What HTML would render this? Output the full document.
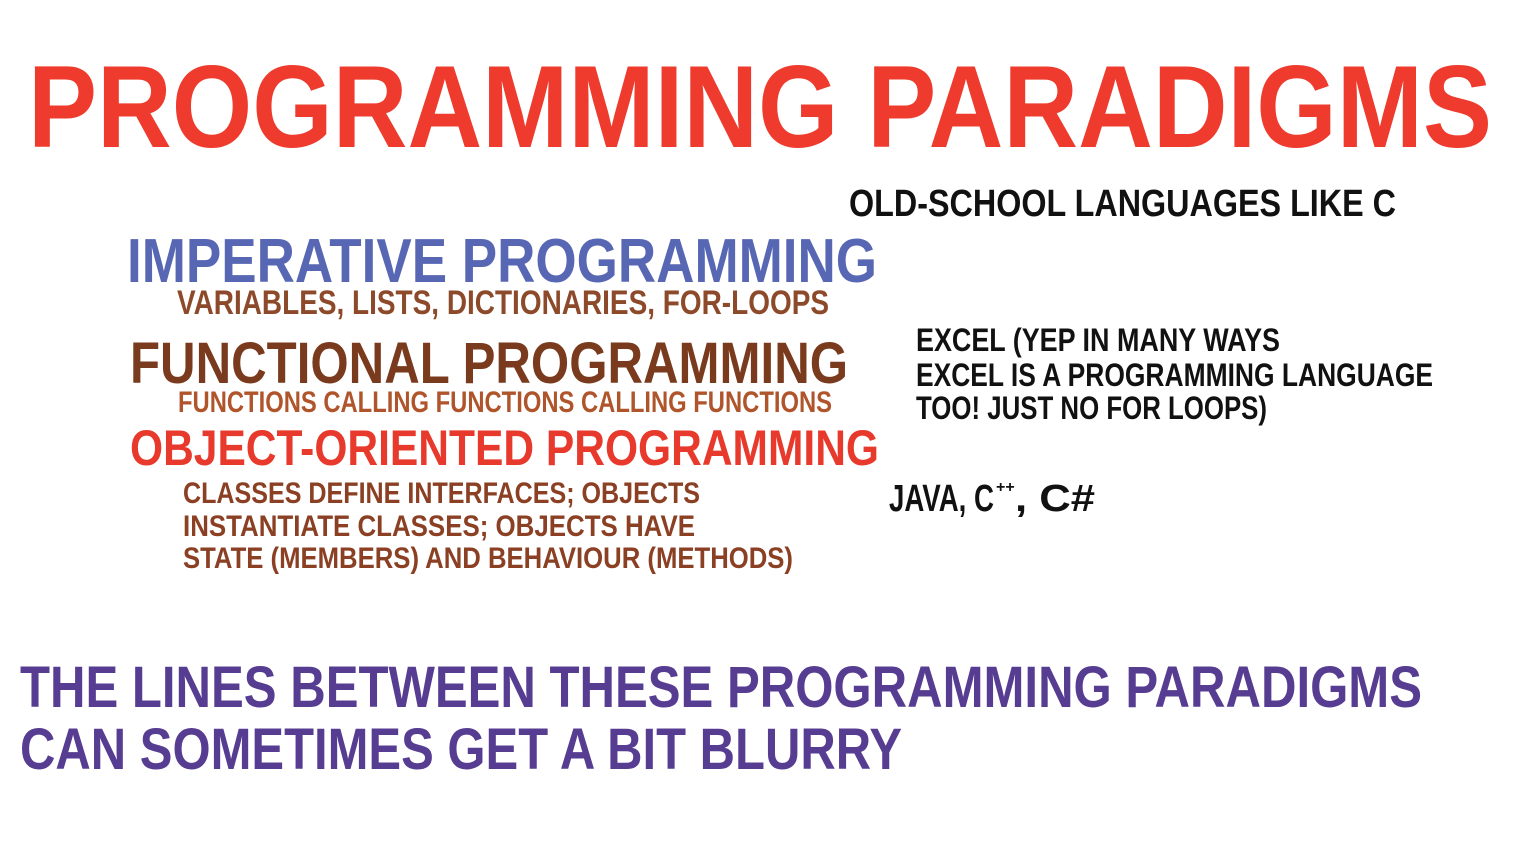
<!DOCTYPE html>
<html><head><meta charset="utf-8"><style>
html,body{margin:0;padding:0;background:#fff;}
svg{display:block;}
text{font-family:"Liberation Sans",sans-serif;font-weight:bold;}
</style></head><body>
<svg width="1531" height="849" viewBox="0 0 1531 849" xmlns="http://www.w3.org/2000/svg">
<rect width="1531" height="849" fill="#fff"/>
<text x="28" y="147" font-size="117" fill="#ee3b2d" textLength="1464" lengthAdjust="spacingAndGlyphs">PROGRAMMING PARADIGMS</text>
<text x="849" y="216" font-size="38" fill="#111" textLength="547" lengthAdjust="spacingAndGlyphs">OLD-SCHOOL LANGUAGES LIKE C</text>
<text x="127" y="282" font-size="62" fill="#5867b3" textLength="750" lengthAdjust="spacingAndGlyphs">IMPERATIVE PROGRAMMING</text>
<text x="177" y="314" font-size="34" fill="#8d4a2a" textLength="652" lengthAdjust="spacingAndGlyphs">VARIABLES, LISTS, DICTIONARIES, FOR-LOOPS</text>
<text x="130" y="383" font-size="58" fill="#7a3a1d" textLength="718" lengthAdjust="spacingAndGlyphs">FUNCTIONAL PROGRAMMING</text>
<text x="178" y="412" font-size="30" fill="#b0552b" textLength="654" lengthAdjust="spacingAndGlyphs">FUNCTIONS CALLING FUNCTIONS CALLING FUNCTIONS</text>
<text x="130" y="465" font-size="50" fill="#e83a2c" textLength="749" lengthAdjust="spacingAndGlyphs">OBJECT-ORIENTED PROGRAMMING</text>
<text x="183" y="503" font-size="30" fill="#8b4024" textLength="517" lengthAdjust="spacingAndGlyphs">CLASSES DEFINE INTERFACES; OBJECTS</text>
<text x="183" y="536" font-size="30" fill="#8b4024" textLength="512" lengthAdjust="spacingAndGlyphs">INSTANTIATE CLASSES; OBJECTS HAVE</text>
<text x="183" y="568" font-size="30" fill="#8b4024" textLength="610" lengthAdjust="spacingAndGlyphs">STATE (MEMBERS) AND BEHAVIOUR (METHODS)</text>
<text x="916" y="351" font-size="32" fill="#111" textLength="364" lengthAdjust="spacingAndGlyphs">EXCEL (YEP IN MANY WAYS</text>
<text x="916" y="386" font-size="32" fill="#111" textLength="517" lengthAdjust="spacingAndGlyphs">EXCEL IS A PROGRAMMING LANGUAGE</text>
<text x="916" y="419" font-size="32" fill="#111" textLength="351" lengthAdjust="spacingAndGlyphs">TOO! JUST NO FOR LOOPS)</text>
<text x="889" y="511" font-size="38" fill="#111" textLength="105" lengthAdjust="spacingAndGlyphs">JAVA, C</text>
<text x="996" y="492" font-size="16" fill="#111">++</text>
<text x="1015" y="511" font-size="38" fill="#111" textLength="80" lengthAdjust="spacingAndGlyphs">, C#</text>
<text x="20" y="707" font-size="58" fill="#573d92" textLength="1402" lengthAdjust="spacingAndGlyphs">THE LINES BETWEEN THESE PROGRAMMING PARADIGMS</text>
<text x="20" y="769" font-size="58" fill="#573d92" textLength="882" lengthAdjust="spacingAndGlyphs">CAN SOMETIMES GET A BIT BLURRY</text>
</svg>
</body></html>
